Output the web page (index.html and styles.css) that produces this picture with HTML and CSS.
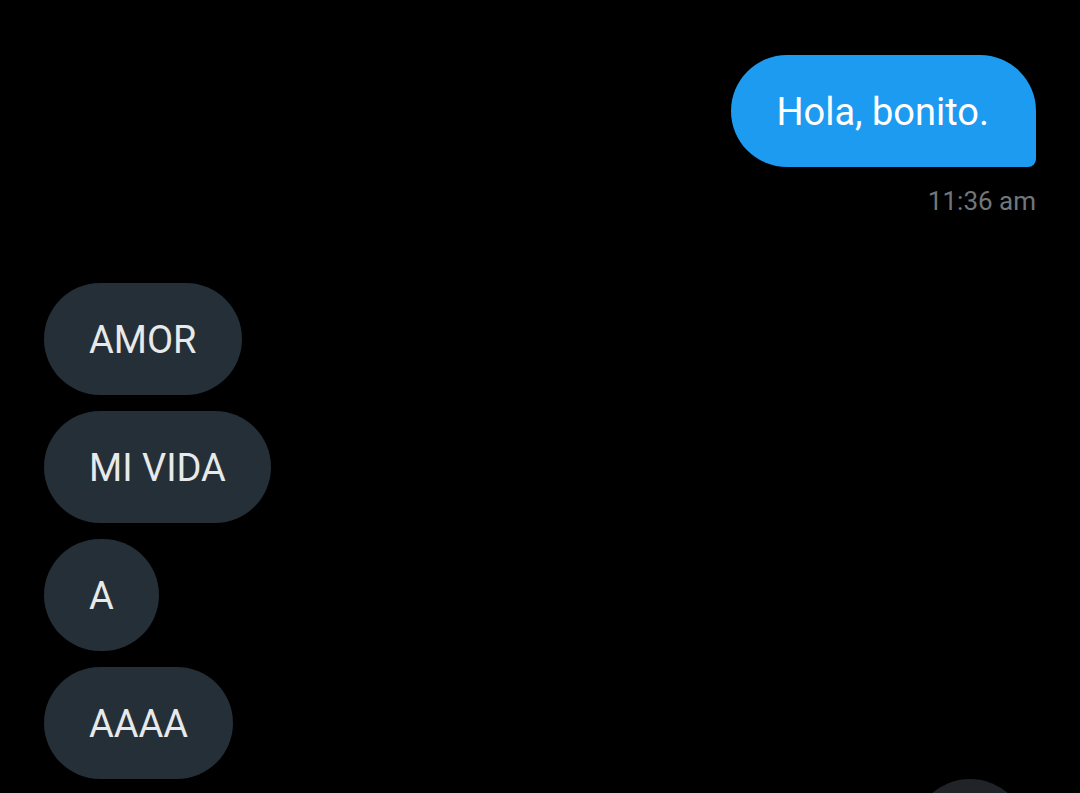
FILE: index.html
```html
<!DOCTYPE html>
<html lang="es">
<head>
<meta charset="utf-8">
<link rel="stylesheet" href="styles.css">
</head>
<body>
<main class="chat">
  <div class="sent-group">
    <div class="bubble bubble-sent">Hola, bonito.</div>
    <div class="time">11:36 am</div>
  </div>
  <div class="received-group">
    <div class="bubble bubble-received">AMOR</div>
    <div class="bubble bubble-received">MI VIDA</div>
    <div class="bubble bubble-received">A</div>
    <div class="bubble bubble-received">AAAA</div>
  </div>
  <div class="scroll-btn"></div>
</main>
</body>
</html>
```
FILE: styles.css
```css
html, body {
  margin: 0;
  padding: 0;
  background: #000;
  height: 100%;
  overflow: hidden;
}
.chat {
  position: relative;
  height: 793px;
  box-sizing: border-box;
  padding: 55px 44px 0;
  display: flex;
  flex-direction: column;
  font-family: Roboto, "Liberation Sans", sans-serif;
}
.sent-group {
  display: flex;
  flex-direction: column;
  align-items: flex-end;
}
.bubble {
  font-size: 38px;
  line-height: 45px;
  padding: 35px 45px 32px;
  white-space: nowrap;
}
.bubble-sent {
  background: #1d9bf0;
  color: #fff;
  border-radius: 56px 56px 8px 56px;
  padding-right: 47px;
}
.time {
  margin-top: 19px;
  font-size: 26px;
  line-height: 30px;
  color: #71767b;
}
.received-group {
  margin-top: 67px;
  display: flex;
  flex-direction: column;
  align-items: flex-start;
  gap: 16px;
}
.bubble-received {
  background: #252f37;
  color: #e7e9ea;
  border-radius: 56px;
}
.scroll-btn {
  position: absolute;
  left: 912px;
  top: 779px;
  width: 116px;
  height: 116px;
  border-radius: 50%;
  background: #202428;
}
```
